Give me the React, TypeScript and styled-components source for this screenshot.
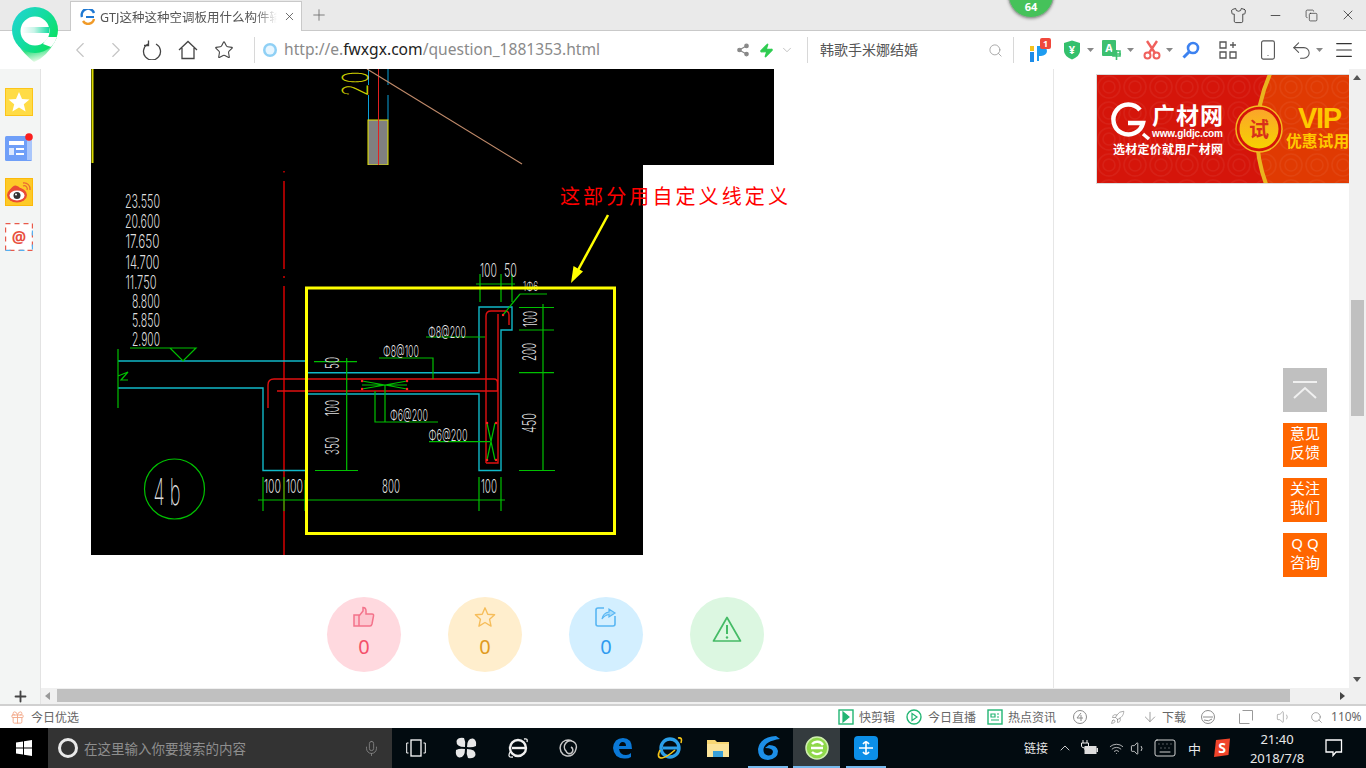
import type { ReactNode } from "react";
import styled, { createGlobalStyle } from "styled-components";
import {
  ArrowDown,
  ChevronDown,
  ChevronLeft,
  ChevronRight,
  ChevronUp,
  Copy,
  Gift,
  Keyboard,
  Menu,
  Mic,
  Minus,
  Plus,
  Rocket,
  Search,
  Share2,
  Shirt,
  Smartphone,
  Star,
  Undo2,
  Volume1,
  Wifi,
  X,
  Zap,
} from "lucide-react";

const GlobalStyle = createGlobalStyle`
  html, body {
    margin: 0;
    padding: 0;
    overflow: hidden;
    background: #fff;
  }
  * {
    box-sizing: border-box;
  }
`;

const Page = styled.div`
  position: relative;
  width: 1366px;
  height: 768px;
  display: flex;
  flex-direction: column;
  overflow: hidden;
  font-family: "Noto Sans", "Noto Sans CJK SC", sans-serif;
`;

/* browser chrome */
const TabStrip = styled.div`
  height: 31px;
  flex: none;
  display: flex;
  align-items: flex-end;
  padding-left: 70px;
  background: #eaeaea;
  border-bottom: 1px solid #c9c9c9;
`;

const Tab = styled.div`
  width: 232px;
  height: 30px;
  margin-bottom: -1px;
  display: flex;
  align-items: center;
  padding-left: 9px;
  background: #fff;
  border: 1px solid #c9c9c9;
  border-bottom: none;
`;

const TabTitle = styled.span`
  width: 177px;
  margin-left: 4px;
  overflow: hidden;
  white-space: nowrap;
  font-size: 12.5px;
  color: #555;
  -webkit-mask-image: linear-gradient(90deg, #000 88%, transparent);
  mask-image: linear-gradient(90deg, #000 88%, transparent);
`;

const NewTab = styled.div`
  width: 34px;
  height: 30px;
  display: flex;
  align-items: center;
  justify-content: center;
  color: #666;
`;

const WindowButtons = styled.div`
  margin-left: auto;
  height: 30px;
  display: flex;
  align-items: center;
  color: #333;
`;

const Slot = styled.div<{ $w: number; $ml?: number; $color?: string }>`
  width: ${(p) => p.$w}px;
  margin-left: ${(p) => p.$ml ?? 0}px;
  flex: none;
  display: flex;
  align-items: center;
  justify-content: center;
  color: ${(p) => p.$color ?? "inherit"};
`;

const LogoMark = styled.div`
  position: absolute;
  left: 11px;
  top: 7px;
  width: 48px;
  height: 56px;
`;

const Badge = styled.div`
  position: absolute;
  left: 1008px;
  top: -28px;
  width: 46px;
  height: 46px;
  padding-top: 27px;
  border-radius: 50%;
  background: #45c25a;
  border: 1px solid #9aa39c;
  box-shadow: 0 1px 3px rgba(0, 0, 0, 0.35);
  text-align: center;
  font-size: 11px;
  font-weight: 700;
  line-height: 14px;
  color: #fff;
`;

const Toolbar = styled.div`
  height: 38px;
  flex: none;
  display: flex;
  align-items: center;
  padding-left: 62px;
  background: #fff;
  color: #555;
`;

const ToolSep = styled.div<{ $ml: number }>`
  width: 1px;
  height: 26px;
  margin-left: ${(p) => p.$ml}px;
  flex: none;
  background: #d8d8d8;
`;

const Url = styled.div`
  width: 450px;
  margin: -2px 0 0 6px;
  font-size: 15.6px;
  color: #8a8a8a;
  white-space: nowrap;
  strong {
    font-weight: 400;
    color: #222;
  }
`;

const SearchText = styled.div`
  width: 167px;
  margin: -3px 0 0 12px;
  font-size: 14px;
  color: #555;
`;

/* page area */
const Body = styled.div`
  position: relative;
  height: 619px;
  flex: none;
  display: flex;
  background: #fff;
`;

const Sidebar = styled.div`
  width: 41px;
  flex: none;
  display: flex;
  flex-direction: column;
  align-items: flex-start;
  padding: 19px 0 0 5px;
  background: #f3f5f4;
  border-right: 1px solid #e3e3e3;
`;

const SideIcon = styled.div<{ $mt: number }>`
  width: 28px;
  height: 28px;
  margin-top: ${(p) => p.$mt}px;
`;

const Content = styled.main`
  width: 1013px;
  flex: none;
  overflow: hidden;
  padding-left: 50px;
  border-right: 1px solid #e6e6e6;
`;

const Sheet = styled.svg`
  display: block;
  overflow: visible;
`;

const CadText = styled.text<{ $thin?: boolean }>`
  font-family: Inter, "Liberation Sans", sans-serif;
  font-weight: ${(p) => (p.$thin ? 200 : 300)};
  fill: #dedede;
`;

const Callout = styled.text`
  font-family: "Noto Sans CJK SC", sans-serif;
  font-size: 20px;
  letter-spacing: 3.1px;
  fill: #ff0000;
`;

const Actions = styled.div`
  display: flex;
  gap: 47px;
  margin: 42px 0 0 236px;
`;

const ActionCircle = styled.div<{ $bg: string; $fg: string; $pt?: number }>`
  width: 74px;
  height: 75px;
  flex: none;
  display: flex;
  flex-direction: column;
  align-items: center;
  padding-top: ${(p) => p.$pt ?? 9}px;
  border-radius: 50%;
  background: ${(p) => p.$bg};
  color: ${(p) => p.$fg};
`;

const ActionCount = styled.span`
  margin-top: 5px;
  font-size: 20px;
  line-height: 28px;
`;

const RightRail = styled.aside`
  width: 295px;
  flex: none;
  padding: 5px 0 0 42px;
`;

const Banner = styled.svg`
  display: block;
  font-family: "Noto Sans CJK SC", sans-serif;
`;

const ScrollTrack = styled.div`
  position: relative;
  width: 17px;
  flex: none;
  background: #f0f0f0;
`;

const ScrollThumb = styled.div`
  position: absolute;
  left: 2px;
  top: 231px;
  width: 13px;
  height: 116px;
  background: #c0c0c0;
`;

const ScrollArrow = styled.div<{ $down?: boolean }>`
  position: absolute;
  left: 4px;
  ${(p) => (p.$down ? "bottom: 6px;" : "top: 6px;")}
  width: 0;
  height: 0;
  border-left: 4px solid transparent;
  border-right: 4px solid transparent;
  ${(p) => (p.$down ? "border-top: 5px solid #555;" : "border-bottom: 5px solid #555;")}
`;

const FloatDock = styled.div`
  position: absolute;
  left: 1283px;
  top: 299px;
  display: flex;
  flex-direction: column;
  gap: 11px;
`;

const DockButton = styled.div<{ $gray?: boolean }>`
  width: 44px;
  height: 44px;
  display: flex;
  align-items: center;
  justify-content: center;
  padding-bottom: ${(p) => (p.$gray ? 0 : 4)}px;
  background: ${(p) => (p.$gray ? "#c0c0c0" : "#ff6600")};
  color: #fff;
  font-size: 15px;
  line-height: 19px;
  text-align: center;
`;

/* bottom bars */
const HScrollRow = styled.div`
  height: 16px;
  flex: none;
  display: flex;
  background: #f0f0f0;
`;

const AddCell = styled.div`
  width: 41px;
  flex: none;
  display: flex;
  align-items: center;
  justify-content: center;
  background: #f3f5f4;
  border-right: 1px solid #e3e3e3;
  color: #444;
`;

const HTrack = styled.div`
  position: relative;
  flex: 1;
  padding: 1px 0 1px 16px;
`;

const HThumb = styled.div`
  width: 1233px;
  height: 13px;
  background: #c0c0c0;
`;

const HArrow = styled.div<{ $right?: boolean }>`
  position: absolute;
  top: 4px;
  ${(p) => (p.$right ? "right: 21px;" : "left: 4px;")}
  width: 0;
  height: 0;
  border-top: 4px solid transparent;
  border-bottom: 4px solid transparent;
  ${(p) => (p.$right ? "border-left: 5px solid #444;" : "border-right: 5px solid #999;")}
`;

const StatusBar = styled.div`
  height: 24px;
  flex: none;
  display: flex;
  align-items: center;
  background: #fff;
  border-top: 2px solid #d0d0d0;
  font-size: 12px;
  color: #666;
`;

const StatusLabel = styled.span<{ $ml?: number; $w?: number }>`
  margin: -1px 0 0 ${(p) => p.$ml ?? 0}px;
  width: ${(p) => (p.$w ? `${p.$w}px` : "auto")};
  flex: none;
  white-space: nowrap;
`;

const Taskbar = styled.div`
  height: 40px;
  flex: none;
  display: flex;
  align-items: stretch;
  background: #020b10;
  color: #e8e8e8;
`;

const StartCell = styled.div`
  width: 48px;
  flex: none;
  display: flex;
  align-items: center;
  justify-content: center;
  background: #000;
`;

const SearchField = styled.div`
  width: 344px;
  flex: none;
  display: flex;
  align-items: center;
  padding-left: 10px;
  background: #333;
  color: #8e8e8e;
  font-size: 13.5px;
`;

const CortanaRing = styled.div`
  width: 20px;
  height: 20px;
  flex: none;
  border: 3px solid #e8e8e8;
  border-radius: 50%;
`;

const SearchHint = styled.span`
  width: 279px;
  margin-left: 6px;
  white-space: nowrap;
`;

const TaskItem = styled.div<{ $w: number; $ml?: number; $running?: boolean; $active?: boolean }>`
  width: ${(p) => p.$w}px;
  margin-left: ${(p) => p.$ml ?? 0}px;
  flex: none;
  display: flex;
  align-items: center;
  justify-content: center;
  background: ${(p) => (p.$active ? "#343b3e" : "transparent")};
  box-shadow: ${(p) => (p.$running ? "inset 0 -2px #76b9ed" : "none")};
`;

const TrayText = styled.span<{ $ml: number; $size: number }>`
  margin-left: ${(p) => p.$ml}px;
  flex: none;
  align-self: center;
  font-size: ${(p) => p.$size}px;
  white-space: nowrap;
`;

const Clock = styled.div`
  width: 60px;
  margin-left: 16px;
  flex: none;
  display: flex;
  flex-direction: column;
  align-items: center;
  justify-content: center;
  gap: 3px;
  font-size: 13px;
  line-height: 16px;
`;

/* drawn icons */
const Svg = ({ w, h = w, vb, children }: { w: number; h?: number; vb?: string; children: ReactNode }) => (
  <svg width={w} height={h} viewBox={vb ?? `0 0 ${w} ${h}`} fill="none">
    {children}
  </svg>
);

const Logo = () => (
  <svg width="48" height="56" viewBox="0 0 48 56">
    <defs>
      <linearGradient id="logoFill" x1="0" y1="0" x2="1" y2="0.7">
        <stop offset="0" stopColor="#22d3d8" />
        <stop offset="0.55" stopColor="#14dca0" />
        <stop offset="1" stopColor="#0ae060" />
      </linearGradient>
      <linearGradient id="logoTail" x1="0" y1="0" x2="0.4" y2="1">
        <stop offset="0" stopColor="#30c8f0" />
        <stop offset="0.5" stopColor="#30e080" />
        <stop offset="1" stopColor="#e4fae4" />
      </linearGradient>
      <linearGradient id="logoBar" x1="0" y1="0" x2="1" y2="0">
        <stop offset="0" stopColor="#fff" />
        <stop offset="0.45" stopColor="#c8f4e8" />
        <stop offset="1" stopColor="#14dca0" />
      </linearGradient>
    </defs>
    <path d="M7 38 Q14 48 23 55 Q36 50 44 34 Z" fill="url(#logoTail)" />
    <circle cx="24" cy="23" r="23" fill="url(#logoFill)" />
    <circle cx="24" cy="24" r="14.5" fill="#fff" />
    <rect x="11" y="20" width="27" height="6" fill="url(#logoBar)" />
    <path d="M37 30 L46 30 Q44 36 40 40 L32 37 Z" fill="#fff" />
  </svg>
);

const TabFavicon = () => (
  <Svg w={16}>
    <path d="M2 8 A6 6 0 0 1 14 4" stroke="#1e78d2" strokeWidth="2.4" />
    <path d="M14 10 A6 6 0 0 1 3 12" stroke="#f09a28" strokeWidth="2.4" />
    <path d="M6 8 H14" stroke="#1e78d2" strokeWidth="2" />
  </Svg>
);

const Reload = () => (
  <Svg w={20} vb="0 0 20 20">
    <path d="M6 4 A8.5 8.5 0 1 0 14 4" stroke="#444" strokeWidth="1.3" />
    <path d="M6.5 0.5 V5.5 H2" stroke="#444" strokeWidth="1.3" />
  </Svg>
);

const HomeIcon = () => (
  <Svg w={20} vb="0 0 20 20">
    <path d="M1 10 L10 1.5 L19 10 M4 8 V18.5 H16 V8" stroke="#444" strokeWidth="1.3" />
  </Svg>
);

const GlobeIcon = () => (
  <Svg w={16}>
    <circle cx="8" cy="8" r="7" fill="#8fd0f5" />
    <circle cx="8" cy="8" r="4.5" fill="#e8f6ff" />
  </Svg>
);

const IpBadge = () => (
  <Svg w={24} h={24}>
    <rect x="3" y="8" width="4" height="5" fill="#f4c21c" />
    <rect x="3" y="14" width="4" height="10" fill="#1e8ce8" />
    <path d="M10 8 H14 A6 5 0 0 1 14 18 H12 V23 H10 Z" fill="#1e9cf0" />
    <rect x="13" y="0" width="11" height="11" rx="2" fill="#f0483c" />
    <text x="18.5" y="9" textAnchor="middle" fontSize="9" fontWeight="700" fill="#fff">
      1
    </text>
  </Svg>
);

const ShieldYen = () => (
  <Svg w={18} h={20}>
    <path d="M1 3 L9 0.5 L17 3 V11 Q17 16 9 19.5 Q1 16 1 11 Z" fill="#34c06c" />
    <text x="9" y="13.5" textAnchor="middle" fontSize="11" fontWeight="700" fill="#fff">
      ¥
    </text>
  </Svg>
);

const TranslateIcon = () => (
  <Svg w={20} h={22}>
    <rect x="0" y="1" width="14" height="16" rx="1" fill="#3cc070" />
    <text x="7" y="13" textAnchor="middle" fontSize="11" fontWeight="700" fill="#fff">
      A
    </text>
    <path d="M10 15 H19 M14.5 11 V21 M11 12 H18 V17 H11 Z" stroke="#3cc070" strokeWidth="1.6" />
  </Svg>
);

const Scissors = () => (
  <Svg w={18} h={20}>
    <path d="M4 1 L12 13 M14 1 L6 13" stroke="#f0605c" strokeWidth="2.4" />
    <circle cx="4.5" cy="15.5" r="3" stroke="#f0605c" strokeWidth="2" />
    <circle cx="13.5" cy="15.5" r="3" stroke="#f0605c" strokeWidth="2" />
  </Svg>
);

const KeyLens = () => (
  <Svg w={18}>
    <circle cx="11" cy="7" r="5" stroke="#3d82f0" strokeWidth="2.6" />
    <path d="M7 11 L1.5 16.5" stroke="#3d82f0" strokeWidth="3" />
  </Svg>
);

const AppGrid = () => (
  <Svg w={18}>
    <path d="M1 1 H7 V7 H1 Z M1 11 H7 V17 H1 Z M11 11 H17 V17 H11 Z M14 1 V7 M11 4 H17" stroke="#555" strokeWidth="1.3" />
  </Svg>
);

const MiniArrow = () => (
  <Svg w={7} h={4}>
    <path d="M0 0 H7 L3.5 4 Z" fill="#888" />
  </Svg>
);

const StarTile = () => (
  <Svg w={28}>
    <rect x="0.5" y="0.5" width="27" height="27" fill="#ffdc46" stroke="#fcc419" />
    <path d="M14 4 L17 11 L24.5 11.5 L18.8 16.3 L20.6 23.6 L14 19.6 L7.4 23.6 L9.2 16.3 L3.5 11.5 L11 11 Z" fill="#fff" />
  </Svg>
);

const NewsTile = () => (
  <Svg w={28}>
    <rect x="0" y="3" width="27" height="25" rx="1.5" fill="#6f9ff8" />
    <rect x="22" y="5" width="5" height="22" fill="#a9c6fb" />
    <rect x="4" y="8" width="15" height="4" fill="#fff" />
    <rect x="4" y="15" width="5" height="7" fill="#dbe8fe" />
    <rect x="11" y="15" width="8" height="2" fill="#fff" />
    <rect x="11" y="20" width="8" height="2" fill="#fff" />
    <circle cx="24" cy="4" r="3.8" fill="#fa1f1f" />
  </Svg>
);

const WeiboTile = () => (
  <Svg w={28}>
    <rect x="0.5" y="0.5" width="27" height="27" fill="#fdca28" stroke="#fcb90a" />
    <ellipse cx="12" cy="17" rx="10" ry="7.5" fill="#ea4c34" />
    <path d="M16 11 Q10 3 4 13 Z" fill="#ea4c34" />
    <ellipse cx="12" cy="17.5" rx="7.5" ry="5" fill="#fff" />
    <circle cx="12" cy="17.5" r="3.5" fill="#333" />
    <circle cx="11" cy="16.5" r="1" fill="#fff" />
    <path d="M18 5 A6 6 0 0 1 25 12 M18 8 A3 3 0 0 1 22 12" stroke="#ea6b34" strokeWidth="1.3" />
  </Svg>
);

const MailTile = () => (
  <Svg w={28}>
    <rect x="0.5" y="0.5" width="27" height="27" fill="#fff" />
    <rect x="0.5" y="0.5" width="27" height="27" stroke="#e85a4a" strokeWidth="1.4" strokeDasharray="5 4 5 4" />
    <path d="M0.5 27.5 H27.5 V0.5" stroke="#55b0f0" strokeWidth="1.4" strokeDasharray="5 9" />
    <text x="14" y="20" textAnchor="middle" fontSize="16" fontWeight="700" fill="#e8503e">
      @
    </text>
  </Svg>
);

const ThumbIcon = () => (
  <Svg w={22} vb="0 0 22 22">
    <path d="M1 9 H6 V20 H1 Z M6 10 L10 5 V1.5 Q13 1.5 13 5 V8 H19 Q21 8 20.5 10 L19 18 Q18.5 20 17 20 H6" stroke="#f4738b" strokeWidth="1.5" fill="#f9a5b4" fillOpacity="0.35" />
  </Svg>
);

const StarOutline = () => (
  <Svg w={22} vb="0 0 24 24">
    <path d="M12 2 L15 9 L22.5 9.6 L17 14.5 L18.6 22 L12 18 L5.4 22 L7 14.5 L1.5 9.6 L9 9 Z" stroke="#f6bd5a" strokeWidth="1.5" strokeLinejoin="round" />
  </Svg>
);

const ShareBox = () => (
  <Svg w={22} vb="0 0 22 22">
    <path d="M9 2 H3 Q1 2 1 4 V18 Q1 20 3 20 H18 Q20 20 20 18 V10" stroke="#58b6f3" strokeWidth="1.6" />
    <path d="M7 13 Q8 7 14 6 V3 L20 7 L14 11 V8.5 Q10 9 7 13 Z" stroke="#58b6f3" strokeWidth="1.2" fill="#a8dcfa" />
  </Svg>
);

const AlertIcon = () => (
  <Svg w={30} vb="0 0 30 30">
    <path d="M15 2.5 L28.5 26 H1.5 Z" stroke="#45bb66" strokeWidth="1.7" strokeLinejoin="round" />
    <path d="M15 10 V19" stroke="#45bb66" strokeWidth="2" />
    <circle cx="15" cy="22.5" r="1.2" fill="#45bb66" />
  </Svg>
);

const DockUp = () => (
  <Svg w={26} h={20}>
    <path d="M1 2 H25 M2 18 L13 8 L24 18" stroke="#f0f0f0" strokeWidth="2" />
  </Svg>
);

const GreenSquareIcon = ({ kind }: { kind: "clip" | "live" | "news" }) => (
  <Svg w={16}>
    {kind === "live" ? (
      <circle cx="8" cy="8" r="7" stroke="#22b573" strokeWidth="1.4" />
    ) : (
      <rect x="1" y="1" width="14" height="14" stroke="#22b573" strokeWidth="1.4" />
    )}
    {kind === "news" ? (
      <path d="M4 5 H8 V8 H4 Z M10 5 H12 M10 8 H12 M4 11 H12" stroke="#22b573" strokeWidth="1.2" />
    ) : (
      <path d={kind === "clip" ? "M5 3 L11 8 L5 13 Z" : "M6 4.5 L11 8 L6 11.5 Z"} fill={kind === "clip" ? "#22b573" : "none"} stroke="#22b573" strokeWidth="1.2" />
    )}
  </Svg>
);

const RoundGray = ({ plus }: { plus?: boolean }) => (
  <Svg w={16}>
    <circle cx="8" cy="8" r="6.5" stroke="#8c8c8c" strokeWidth="1" />
    {plus ? (
      <path d="M9 4 L5 9 H11 M9 6 V12" stroke="#8c8c8c" />
    ) : (
      <path d="M3 8 H13 M4 11 Q9 13 12 10" stroke="#8c8c8c" />
    )}
  </Svg>
);

const PanelIcon = () => (
  <Svg w={14}>
    <path d="M3.5 0.5 H13.5 V10.5 M0.5 3.5 V13.5 H10.5" stroke="#999" />
  </Svg>
);

const WindowsLogo = () => (
  <Svg w={16}>
    <path d="M0 2.5 L7 1.5 V7.5 H0 Z M8 1.3 L16 0 V7.5 H8 Z M0 8.5 H7 V14.5 L0 13.5 Z M8 8.5 H16 V16 L8 14.7 Z" fill="#fff" />
  </Svg>
);

const TaskViewIcon = () => (
  <Svg w={20} h={18}>
    <rect x="5" y="1" width="10" height="16" stroke="#fff" strokeWidth="1.3" />
    <path d="M2.5 4 H0.7 V14 H2.5 M17.5 4 H19.3 V14 H17.5" stroke="#fff" />
  </Svg>
);

const FanIcon = () => (
  <Svg w={22}>
    <path d="M10 10 Q1 10 1.5 4 Q3 0 9 1 Q11 5 10 10 M12 10 Q12 1 18 1.5 Q22 3 21 9 Q17 11 12 10 M12 12 Q21 12 20.5 18 Q19 22 13 21 Q11 17 12 12 M10 12 Q10 21 4 20.5 Q0 19 1 13 Q5 11 10 12" fill="#e8e8e8" />
  </Svg>
);

const IeOutline = () => (
  <Svg w={22}>
    <circle cx="11" cy="11" r="8" stroke="#f0f0f0" strokeWidth="2.4" />
    <path d="M5 11 H19" stroke="#f0f0f0" strokeWidth="2.4" />
    <path d="M17 2 Q21 1 20 5 M3 15 Q0 21 6 20" stroke="#f0f0f0" strokeWidth="1.3" />
  </Svg>
);

const SwirlIcon = () => (
  <Svg w={20}>
    <path d="M14 3 A8 8 0 1 0 18 11 A6 6 0 1 0 8 13 A3.5 3.5 0 1 0 13 9" stroke="#c8c8c8" strokeWidth="1.5" />
  </Svg>
);

const EdgeIcon = () => (
  <Svg w={22}>
    <path d="M2 11 Q3 1 12 1 Q21 1 21 12 H8 Q9 18 15 18 Q18 18 20 16 V20 Q17 22 13 21.5 Q3 21 2 11 Z M8 9 H15 Q15 5 11.5 5 Q9 5 8 9 Z" fill="#0a78d7" fillRule="evenodd" />
  </Svg>
);

const IeColor = () => (
  <Svg w={26}>
    <circle cx="13" cy="13" r="9" stroke="#2b9fe8" strokeWidth="3.4" />
    <path d="M6 13 H21" stroke="#2b9fe8" strokeWidth="3" />
    <path d="M21 3 Q26 2 24 8 M3 15 Q-1 23 5 23 Q10 22 18 15" stroke="#f5c518" strokeWidth="1.6" />
  </Svg>
);

const FolderIcon = () => (
  <Svg w={22} h={20}>
    <path d="M0 2 H8 L10 4 H22 V19 H0 Z" fill="#f7d774" />
    <rect x="0" y="6" width="22" height="13" fill="#fbe49a" />
    <rect x="6" y="13" width="10" height="6" fill="#3aa0d8" />
  </Svg>
);

const BlueG = () => (
  <Svg w={24} h={28}>
    <path d="M20 2 Q4 3 2 15 Q2 26 12 26 Q22 25 22 17 Q21 11 13 11 L9 14 Q17 14 17 18 Q16 22 12 21.5 Q7 20.5 7.5 15 Q9 7 24 5 Z" fill="#1c8fe8" />
  </Svg>
);

const GreenBrowser = () => (
  <Svg w={26}>
    <circle cx="13" cy="13" r="11" fill="#8fd84a" stroke="#cfeeb0" strokeWidth="1.5" />
    <path d="M7 13 H19 M8 9 A7 7 0 0 1 19 10 M18 17 A7 7 0 0 1 8 17" stroke="#fff" strokeWidth="2.4" />
  </Svg>
);

const BlueApp = () => (
  <Svg w={24}>
    <rect width="24" height="24" rx="4" fill="#0c8fe8" />
    <path d="M5 12 H19 M12 5 V19 M9 8 Q12 4 15 8 M9 16 Q12 20 15 16" stroke="#fff" strokeWidth="1.6" />
  </Svg>
);

const PlugBattery = () => (
  <Svg w={18} h={16}>
    <path d="M3 0 V3 M7 0 V3 M1.5 3 H8.5 V6 Q8.5 8 5 8 Q1.5 8 1.5 6 Z M5 8 V10" stroke="#eee" />
    <rect x="4.5" y="6" width="12" height="8" fill="#ddd" />
    <rect x="16.5" y="8" width="1.5" height="4" fill="#ddd" />
  </Svg>
);

const SogouIcon = () => (
  <Svg w={18} h={20}>
    <path d="M3 2 L17 0.5 L15.5 17 L1 19 Z" fill="#f0442a" />
    <text x="9" y="15" textAnchor="middle" fontSize="14" fontWeight="700" fill="#fff">
      S
    </text>
  </Svg>
);

const NotifyIcon = () => (
  <Svg w={18} h={18}>
    <path d="M1 1 H16.5 V13 H11 L8 16.5 V13 H1 Z" stroke="#fff" strokeWidth="1.3" />
  </Svg>
);

/* CAD sheets, drawn in page coordinates through the viewBox */
const Label = ({
  cx,
  cy,
  w,
  fs = 18,
  rot,
  fill,
  thin,
  children,
}: {
  cx: number;
  cy: number;
  w: number;
  fs?: number;
  rot?: boolean;
  fill?: string;
  thin?: boolean;
  children: string;
}) => (
  <CadText
    $thin={thin}
    x={cx}
    y={cy + fs * 0.36}
    fontSize={fs}
    textAnchor="middle"
    textLength={w}
    lengthAdjust="spacingAndGlyphs"
    transform={rot ? `rotate(-90 ${cx} ${cy})` : undefined}
    style={fill ? { fill } : undefined}
  >
    {children}
  </CadText>
);

const elevations: [string, number, number, number][] = [
  ["23.550", 142.5, 202, 35],
  ["20.600", 142.5, 222, 35],
  ["17.650", 142.5, 242, 34],
  ["14.700", 142.5, 263, 34],
  ["11.750", 141, 283, 31],
  ["8.800", 146, 302, 28],
  ["5.850", 146, 321, 28],
  ["2.900", 146, 340, 28],
];

const TopSheet = () => (
  <Sheet width="683" height="96" viewBox="91 69 683 96">
    <rect x="91" y="69" width="683" height="96" fill="#000" />
    <path d="M92.5 69 V163" stroke="#d8d800" strokeWidth="2" />
    <path d="M368.5 69 V85 M368.5 95 V120 M388 69 V85 M388 95 V120" stroke="#0aa0d8" />
    <rect x="368" y="120" width="20" height="45" fill="#808080" stroke="#e8e800" strokeWidth="1" />
    <path d="M378.5 69 V165" stroke="#e02020" />
    <path d="M367 69 L522 164" stroke="#c08a6a" strokeWidth="1.2" />
    <Label cx={355} cy={84} w={25} fs={36} rot thin fill="#c8c800">
      20
    </Label>
  </Sheet>
);

const BottomSheet = () => (
  <Sheet width="552" height="390" viewBox="91 165 552 390">
    <rect x="91" y="165" width="552" height="390" fill="#000" />
    {elevations.map(([t, cx, cy, w]) => (
      <Label key={t} cx={cx} cy={cy} w={w}>
        {t}
      </Label>
    ))}
    <path d="M284 171 V172.5 M284 181 V269 M284 276 V278 M284 286 V555" stroke="#a00000" strokeWidth="2" fill="none" />
    <path
      d="M118 361 H305 M118 388 H263 V470.5 H306 M306 372.7 H479 V307 H512 V330 H501 V470.5 H479 V394 H307"
      stroke="#10b8c8"
      strokeWidth="1.4"
      fill="none"
    />
    <path
      d="M268 408 V385 Q268 379 274 379 H494 Q497.5 379 497.5 383 V391 M277 391 H498 M486 463 V316 Q486 311 491 311 H505 Q509 311 509 315 V325 M498 314 V463 H486"
      stroke="#e01010"
      strokeWidth="1.4"
      fill="none"
    />
    <path
      d="M130 348 H196 L183 361 L170 348 M118 349 V408 M118 376 L128 372 L121 380 L128 380 M314 361.7 H357 M346.7 358 V470.5 M315 470.5 H358
      M385 385 V422 M375 391 V422 H438 M379 358 H433 V379 M426 337 H485 M429 441.7 H490
      M362 389 L385 385 L407 381 M362 381 L385 385 L407 389 M362 385 L407 385
      M487 423 L495 460 M495 423 L487 460
      M476 284 H515 M480 274 V302 M501 274 V302 M512 274 V302 M520 294 H547 M520 294 L503 315
      M543 304 V470.5 M519 307.5 H554 M519 330 H554 M519 372.7 H554 M519 470.5 H555
      M258 500 H505 M263 477 V511 M284 477 V511 M305 480 V511 M479 477 V511 M501 477 V511"
      stroke="#00c000"
      strokeWidth="1.2"
      fill="none"
    />
    <path d="M362 381 h.1 M407 381 h.1 M362 389 h.1 M407 389 h.1 M487 423 h.1 M496 423 h.1 M487 460 h.1 M496 460 h.1 M503 315 h.1" stroke="#ff2020" strokeWidth="2.4" strokeLinecap="round" />
    <circle cx="174.5" cy="489" r="30" stroke="#00c000" strokeWidth="1.2" fill="none" />
    <Label cx={167} cy={492.5} w={27} fs={36} thin>
      4 b
    </Label>
    <Label cx={333} cy={363} w={12} rot>50</Label>
    <Label cx={333} cy={408} w={16} rot>100</Label>
    <Label cx={333} cy={446} w={18} rot>350</Label>
    <Label cx={488.5} cy={271} w={17}>100</Label>
    <Label cx={510.5} cy={271} w={13}>50</Label>
    <Label cx={530.5} cy={286} w={15} fs={13}>1Φ6</Label>
    <Label cx={531} cy={319} w={16} rot>100</Label>
    <Label cx={530} cy={352} w={18} rot>200</Label>
    <Label cx={530} cy={423} w={20} rot>450</Label>
    <Label cx={272.5} cy={487} w={17}>100</Label>
    <Label cx={294.5} cy={487} w={17}>100</Label>
    <Label cx={391} cy={487} w={18}>800</Label>
    <Label cx={489} cy={487} w={16}>100</Label>
    <Label cx={447} cy={332} w={38} fs={16}>Φ8@200</Label>
    <Label cx={401} cy={351} w={36} fs={16}>Φ8@100</Label>
    <Label cx={409} cy={415} w={38} fs={16}>Φ6@200</Label>
    <Label cx={448} cy={435} w={39} fs={16}>Φ6@200</Label>
    <rect x="306.5" y="288" width="308" height="245.5" stroke="#ffff00" strokeWidth="3" fill="none" />
    <path d="M608 215 L577 272" stroke="#ffff00" strokeWidth="2.5" />
    <path d="M571 283 L573.5 266 L583 271.5 Z" fill="#ffff00" />
    <Callout x="560" y="204">
      这部分用自定义线定义
    </Callout>
  </Sheet>
);

const AdBanner = () => (
  <Banner width="253" height="110" viewBox="0 0 253 110">
    <defs>
      <pattern id="swirl" width="26" height="26" patternUnits="userSpaceOnUse">
        <circle cx="13" cy="13" r="11" fill="none" stroke="#fff" strokeOpacity="0.05" strokeWidth="1.5" />
        <circle cx="13" cy="13" r="6" fill="none" stroke="#fff" strokeOpacity="0.05" strokeWidth="1.5" />
      </pattern>
      <linearGradient id="coin" x1="0" y1="0" x2="0" y2="1">
        <stop offset="0" stopColor="#fba52a" />
        <stop offset="1" stopColor="#f6d200" />
      </linearGradient>
    </defs>
    <rect width="253" height="110" fill="#d5150a" />
    <path d="M174 0 Q150 55 170 110 H253 V0 Z" fill="#e03a02" />
    <rect width="253" height="110" fill="url(#swirl)" />
    <path d="M174 0 Q150 55 170 110" fill="none" stroke="#e9b51e" strokeWidth="4" />
    <rect x="0.5" y="0.5" width="253" height="109" fill="none" stroke="#dcdcdc" />
    <path d="M44 36 A15 15 0 1 0 47 49 H32" fill="none" stroke="#fff" strokeWidth="4.5" />
    <path d="M47 60 L53 65" stroke="#fff" strokeWidth="3.5" />
    <text x="56" y="50" fontSize="23" fontWeight="700" fill="#fff" textLength="71">
      广材网
    </text>
    <text x="56" y="63" fontSize="10" fontWeight="700" fill="#fff" textLength="71" fontFamily="Liberation Sans">
      www.gldjc.com
    </text>
    <text x="17" y="80" fontSize="12" fontWeight="700" fill="#fff" textLength="110">
      选材定价就用广材网
    </text>
    <circle cx="163" cy="55" r="23" fill="#d5150a" stroke="#f4b820" strokeWidth="1.5" />
    <circle cx="163" cy="55" r="19.5" fill="url(#coin)" />
    <text x="163" y="63" fontSize="20" fontWeight="700" fill="#d8301a" textAnchor="middle">
      试
    </text>
    <text x="202" y="54" fontSize="29" fontWeight="700" fill="#ffc800" fontFamily="Liberation Sans" textLength="44">
      VIP
    </text>
    <text x="190" y="73" fontSize="15.8" fontWeight="700" fill="#ffc800">
      优惠试用
    </text>
  </Banner>
);

const App = () => (
  <Page>
    <GlobalStyle />
    <TabStrip>
      <Tab>
        <TabFavicon />
        <TabTitle>GTJ这种这种空调板用什么构件输入比较好</TabTitle>
        <Slot $w={20} $ml={2} $color="#444">
          <X size={13} strokeWidth={1.4} />
        </Slot>
      </Tab>
      <NewTab>
        <Plus size={18} strokeWidth={1.1} />
      </NewTab>
      <WindowButtons>
        <Slot $w={36}>
          <Shirt size={17} strokeWidth={1.2} />
        </Slot>
        <Slot $w={36} $ml={1}>
          <Minus size={15} strokeWidth={1.3} />
        </Slot>
        <Slot $w={36}>
          <Copy size={13} strokeWidth={1.3} />
        </Slot>
        <Slot $w={36} $ml={1}>
          <X size={16} strokeWidth={1.2} />
        </Slot>
      </WindowButtons>
    </TabStrip>
    <Toolbar>
      <Slot $w={36} $color="#c4c4c4">
        <ChevronLeft size={26} strokeWidth={1} />
      </Slot>
      <Slot $w={36} $color="#c4c4c4">
        <ChevronRight size={26} strokeWidth={1} />
      </Slot>
      <Slot $w={36}>
        <Reload />
      </Slot>
      <Slot $w={36}>
        <HomeIcon />
      </Slot>
      <Slot $w={36} $color="#444">
        <Star size={20} strokeWidth={1.3} />
      </Slot>
      <ToolSep $ml={12} />
      <Slot $w={16} $ml={7}>
        <GlobeIcon />
      </Slot>
      <Url>
        http://e.<strong>fwxgx.com</strong>/question_1881353.html
      </Url>
      <Slot $w={18} $color="#888">
        <Share2 size={14} fill="#888" />
      </Slot>
      <Slot $w={28} $color="#2ecc50">
        <Zap size={15} fill="#2ecc50" />
      </Slot>
      <Slot $w={14} $color="#aaa">
        <ChevronDown size={16} strokeWidth={1.2} />
      </Slot>
      <ToolSep $ml={13} />
      <SearchText>韩歌手米娜结婚</SearchText>
      <Slot $w={16} $color="#999">
        <Search size={15} strokeWidth={1.3} />
      </Slot>
      <ToolSep $ml={10} />
      <Slot $w={24} $ml={13}>
        <IpBadge />
      </Slot>
      <Slot $w={24} $ml={9}>
        <ShieldYen />
      </Slot>
      <Slot $w={12}>
        <MiniArrow />
      </Slot>
      <Slot $w={24} $ml={4}>
        <TranslateIcon />
      </Slot>
      <Slot $w={12}>
        <MiniArrow />
      </Slot>
      <Slot $w={24} $ml={4}>
        <Scissors />
      </Slot>
      <Slot $w={10}>
        <MiniArrow />
      </Slot>
      <Slot $w={24} $ml={5}>
        <KeyLens />
      </Slot>
      <Slot $w={24} $ml={13}>
        <AppGrid />
      </Slot>
      <Slot $w={24} $ml={16}>
        <Smartphone size={22} strokeWidth={1.2} />
      </Slot>
      <Slot $w={24} $ml={9}>
        <Undo2 size={23} strokeWidth={1.1} />
      </Slot>
      <Slot $w={12}>
        <MiniArrow />
      </Slot>
      <Slot $w={24} $ml={7} $color="#333">
        <Menu size={22} strokeWidth={1.2} />
      </Slot>
    </Toolbar>
    <Body>
      <Sidebar>
        <SideIcon $mt={0}>
          <StarTile />
        </SideIcon>
        <SideIcon $mt={17}>
          <NewsTile />
        </SideIcon>
        <SideIcon $mt={17}>
          <WeiboTile />
        </SideIcon>
        <SideIcon $mt={17}>
          <MailTile />
        </SideIcon>
      </Sidebar>
      <Content>
        <TopSheet />
        <BottomSheet />
        <Actions>
          <ActionCircle $bg="#ffd9df" $fg="#f4506a">
            <ThumbIcon />
            <ActionCount>0</ActionCount>
          </ActionCircle>
          <ActionCircle $bg="#ffeecd" $fg="#e09a20">
            <StarOutline />
            <ActionCount>0</ActionCount>
          </ActionCircle>
          <ActionCircle $bg="#d3efff" $fg="#2f9bef">
            <ShareBox />
            <ActionCount>0</ActionCount>
          </ActionCircle>
          <ActionCircle $bg="#dcf7e1" $fg="#45bb66" $pt={18}>
            <AlertIcon />
          </ActionCircle>
        </Actions>
      </Content>
      <RightRail>
        <AdBanner />
      </RightRail>
      <ScrollTrack>
        <ScrollArrow />
        <ScrollThumb />
        <ScrollArrow $down />
      </ScrollTrack>
      <FloatDock>
        <DockButton $gray>
          <DockUp />
        </DockButton>
        <DockButton>
          意见
          <br />
          反馈
        </DockButton>
        <DockButton>
          关注
          <br />
          我们
        </DockButton>
        <DockButton>
          Q Q
          <br />
          咨询
        </DockButton>
      </FloatDock>
    </Body>
    <HScrollRow>
      <AddCell>
        <Plus size={17} strokeWidth={2.6} />
      </AddCell>
      <HTrack>
        <HArrow />
        <HThumb />
        <HArrow $right />
      </HTrack>
    </HScrollRow>
    <StatusBar>
      <Slot $w={16} $ml={9} $color="#f2a98a">
        <Gift size={15} strokeWidth={1.5} />
      </Slot>
      <StatusLabel $ml={6} $w={807}>
        今日优选
      </StatusLabel>
      <Slot $w={16}>
        <GreenSquareIcon kind="clip" />
      </Slot>
      <StatusLabel $ml={5} $w={36}>
        快剪辑
      </StatusLabel>
      <Slot $w={16} $ml={11}>
        <GreenSquareIcon kind="live" />
      </Slot>
      <StatusLabel $ml={6} $w={48}>
        今日直播
      </StatusLabel>
      <Slot $w={16} $ml={11}>
        <GreenSquareIcon kind="news" />
      </Slot>
      <StatusLabel $ml={5} $w={48}>
        热点资讯
      </StatusLabel>
      <Slot $w={16} $ml={16}>
        <RoundGray plus />
      </Slot>
      <Slot $w={16} $ml={21} $color="#888">
        <Rocket size={15} strokeWidth={1.1} />
      </Slot>
      <Slot $w={16} $ml={17} $color="#888">
        <ArrowDown size={16} strokeWidth={1.2} />
      </Slot>
      <StatusLabel $ml={4}>下载</StatusLabel>
      <Slot $w={16} $ml={14}>
        <RoundGray />
      </Slot>
      <Slot $w={16} $ml={22}>
        <PanelIcon />
      </Slot>
      <Slot $w={16} $ml={22} $color="#999">
        <Volume1 size={16} strokeWidth={1.1} />
      </Slot>
      <Slot $w={16} $ml={16} $color="#888">
        <Search size={13} strokeWidth={1.3} />
      </Slot>
      <StatusLabel $ml={7}>110%</StatusLabel>
    </StatusBar>
    <Taskbar>
      <StartCell>
        <WindowsLogo />
      </StartCell>
      <SearchField>
        <CortanaRing />
        <SearchHint>在这里输入你要搜索的内容</SearchHint>
        <Mic size={17} strokeWidth={1.1} />
      </SearchField>
      <TaskItem $w={48}>
        <TaskViewIcon />
      </TaskItem>
      <TaskItem $w={48} $ml={2}>
        <FanIcon />
      </TaskItem>
      <TaskItem $w={48} $ml={4}>
        <IeOutline />
      </TaskItem>
      <TaskItem $w={48} $ml={2}>
        <SwirlIcon />
      </TaskItem>
      <TaskItem $w={48} $ml={6}>
        <EdgeIcon />
      </TaskItem>
      <TaskItem $w={48}>
        <IeColor />
      </TaskItem>
      <TaskItem $w={48}>
        <FolderIcon />
      </TaskItem>
      <TaskItem $w={40} $ml={6} $running>
        <BlueG />
      </TaskItem>
      <TaskItem $w={47} $ml={5} $running $active>
        <GreenBrowser />
      </TaskItem>
      <TaskItem $w={40} $ml={6} $running>
        <BlueApp />
      </TaskItem>
      <TrayText $ml={138} $size={12}>
        链接
      </TrayText>
      <TaskItem $w={16} $ml={9}>
        <ChevronUp size={16} strokeWidth={1.3} />
      </TaskItem>
      <TaskItem $w={20} $ml={6}>
        <PlugBattery />
      </TaskItem>
      <TaskItem $w={18} $ml={8}>
        <Wifi size={15} strokeWidth={1.2} />
      </TaskItem>
      <TaskItem $w={18} $ml={4}>
        <Volume1 size={17} strokeWidth={1.2} />
      </TaskItem>
      <TaskItem $w={24} $ml={6}>
        <Keyboard size={24} strokeWidth={0.9} />
      </TaskItem>
      <TrayText $ml={11} $size={13}>
        中
      </TrayText>
      <TaskItem $w={18} $ml={12}>
        <SogouIcon />
      </TaskItem>
      <Clock>
        <span>21:40</span>
        <span>2018/7/8</span>
      </Clock>
      <TaskItem $w={18} $ml={18}>
        <NotifyIcon />
      </TaskItem>
    </Taskbar>
    <LogoMark>
      <Logo />
    </LogoMark>
    <Badge>64</Badge>
  </Page>
);

export default App;
